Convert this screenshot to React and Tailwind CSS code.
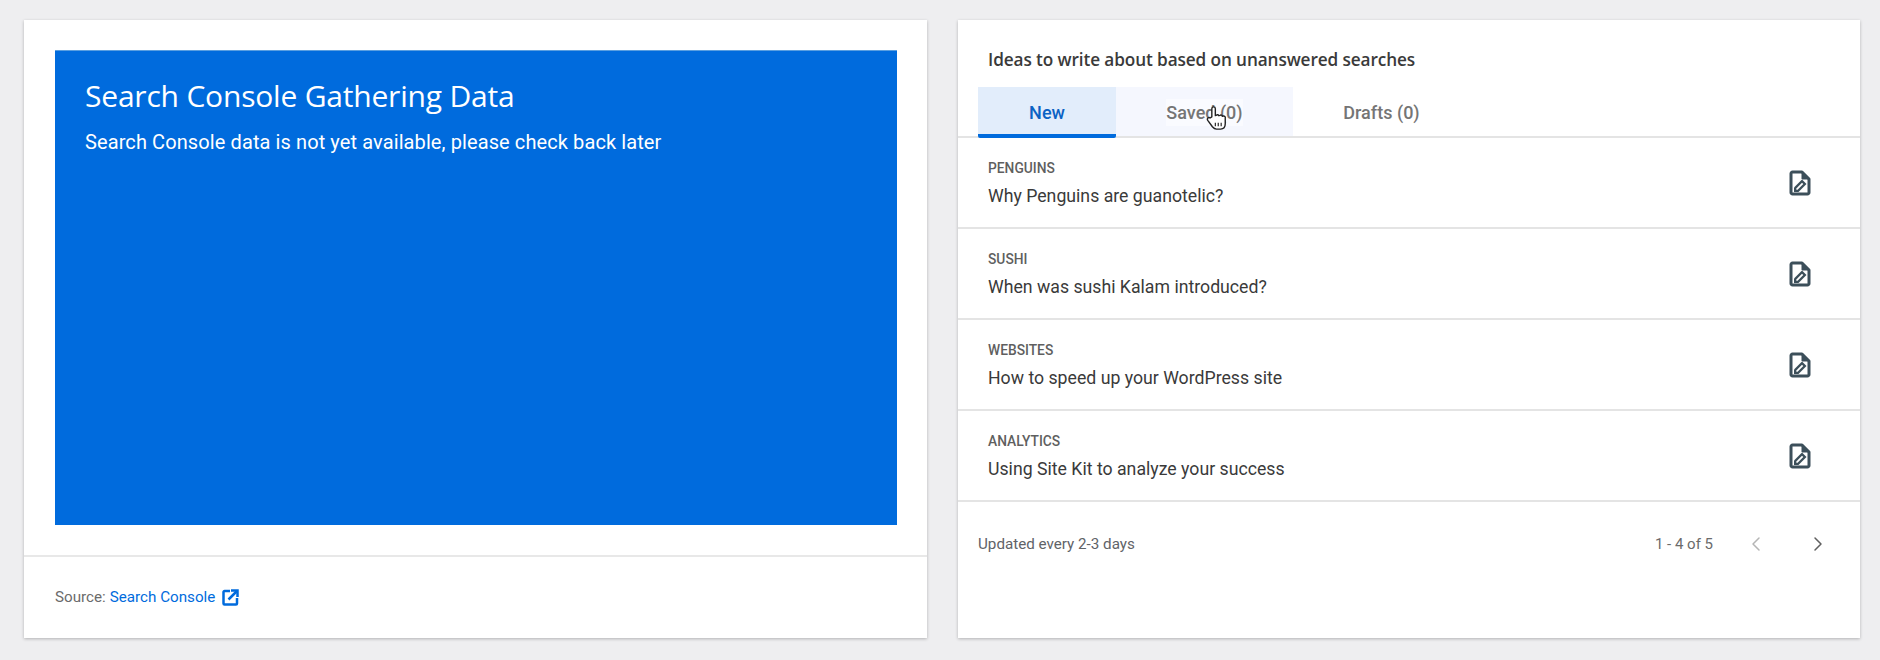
import React from "react";
import { ChevronLeft, ChevronRight } from "lucide-react";

const ideas = [
  { topic: "PENGUINS", title: "Why Penguins are guanotelic?" },
  { topic: "SUSHI", title: "When was sushi Kalam introduced?" },
  { topic: "WEBSITES", title: "How to speed up your WordPress site" },
  { topic: "ANALYTICS", title: "Using Site Kit to analyze your success" },
];

function DraftIcon() {
  return (
    <svg width="24" height="28" viewBox="0 0 24 28" fill="none">
      <path d="M5 3h9l7 7v13.500a1.500 1.500 0 0 1-1.500 1.500h-15A1.500 1.500 0 0 1 3 23.500V4.500A1.500 1.500 0 0 1 4.500 3z" stroke="#3c4f5a" strokeWidth="3" strokeLinejoin="round" />
      <path d="M14 3v7h7z" fill="#3c4f5a" stroke="#3c4f5a" strokeWidth="1" />
      <path d="M6 23v-4.500l8-8 4.500 4.500-8 8z" fill="#3c4f5a" />
      <path d="M8.300 20.700v-1.300l5.700-5.700 1.300 1.300-5.700 5.700z" fill="#ffffff" />
    </svg>
  );
}

function ExternalIcon() {
  return (
    <svg width="17" height="17" viewBox="0 0 17 17" fill="none" stroke="#006bdd" strokeWidth="2.500">
      <path d="M8 2H2.500a1 1 0 0 0-1 1v11.500a1 1 0 0 0 1 1H14a1 1 0 0 0 1-1V9" />
      <path d="M6.500 10.500 15 2" />
      <path d="M9 1.500h6.500V8" />
    </svg>
  );
}

function HandCursor() {
  return (
    <svg className="absolute left-[90px] top-[18px]" width="21" height="26" viewBox="0 0 18 22">
      <path d="M5 10V3a1.500 1.500 0 0 1 3 0v6l1-.5a1.300 1.300 0 0 1 2 .5l1-.3a1.300 1.300 0 0 1 2 .8l.8-.2A1.400 1.400 0 0 1 16.500 11v5c0 2.500-1.500 4.500-4 4.500H9c-1.500 0-2.500-.8-3.500-2L1.500 13c-1-1.500.8-3 2-2z" fill="#ffffff" stroke="#222222" strokeWidth="1.200" strokeLinejoin="round" />
      <path d="M8 15v3M10.500 15v3M13 15v3" stroke="#222222" strokeWidth="1" />
    </svg>
  );
}

export default function App() {
  return (
    <div className="w-[1880px] h-[660px] bg-[#eeeef0] flex gap-[31px] pl-[24px] pt-[20px] font-['Roboto',sans-serif] overflow-hidden">
      {/* tarjeta izquierda */}
      <div className="w-[903px] h-[618px] bg-white shadow-[0_1px_3px_rgba(0,0,0,0.25)] flex flex-col">
        <div className="h-[537px] pt-[30px] pl-[31px] pr-[30px] border-b-2 border-[#e8e8e8]">
          <div className="h-[475px] bg-[#006bdd] border-t border-[#5a9fe0] text-white px-[30px] pt-[27px]">
            <h2 className="text-[30px] leading-[36px] font-['Open_Sans',sans-serif] tracking-[-0.2px]">Search Console Gathering Data</h2>
            <p className="text-[20px] leading-[24px] mt-[16px] tracking-[0.1px]">Search Console data is not yet available, please check back later</p>
          </div>
        </div>
        <div className="flex items-center pl-[31px] h-[80px] text-[15.200px] text-[#6b6b6b]">
          <span>Source:</span>
          <span className="text-[#006bdd] ml-[4px]">Search Console</span>
          <span className="ml-[7px]"><ExternalIcon /></span>
        </div>
      </div>

      {/* tarjeta derecha */}
      <div className="w-[902px] h-[618px] bg-white shadow-[0_1px_3px_rgba(0,0,0,0.25)] flex flex-col">
        <h3 className="pl-[30px] pt-[30px] h-[67px] text-[17.200px] leading-[20px] font-semibold text-[#3a3a3a] font-['Open_Sans',sans-serif] tracking-[-0.1px]">Ideas to write about based on unanswered searches</h3>
        <div className="flex pl-[20px] h-[51px] border-b-2 border-[#e4e4e4] text-[18px] font-medium">
          <div className="w-[138px] bg-[#e2edfb] text-[#0a62c4] border-b-4 border-[#006bdd] rounded-b-[2px] flex items-center justify-center -mb-[2px] pt-[4px]">New</div>
          <div className="relative w-[177px] bg-[#f5f7fe] text-[#757575] flex items-center justify-center pt-[2px]">
            <span className="bg-[#fafbff]">Saved (0)</span>
            <HandCursor />
          </div>
          <div className="w-[177px] text-[#757575] flex items-center justify-center pt-[2px]">Drafts (0)</div>
        </div>
        {ideas.map((idea) => (
          <div key={idea.topic} className="h-[91px] pl-[30px] pr-[48px] flex items-center justify-between border-b-2 border-[#e4e4e4]">
            <div className="pt-[1px]">
              <div className="text-[13.800px] leading-[18px] font-medium text-[#5f5f5f]">{idea.topic}</div>
              <div className="text-[17.700px] leading-[24px] mt-[7px] text-[#3a3a3a]">{idea.title}</div>
            </div>
            <DraftIcon />
          </div>
        ))}
        <div className="flex items-center justify-between pl-[20px] pr-[30px] h-[84px] text-[15.200px] text-[#5f6368]">
          <span>Updated every 2-3 days</span>
          <div className="flex items-center">
            <span className="text-[15px] text-[#6b6b6b]">1 - 4 of 5</span>
            <ChevronLeft className="ml-[31px] text-[#b5b5b5]" size={24} strokeWidth={1.500} />
            <ChevronRight className="ml-[38px] text-[#5f5f5f]" size={24} strokeWidth={1.500} />
          </div>
        </div>
      </div>
    </div>
  );
}
